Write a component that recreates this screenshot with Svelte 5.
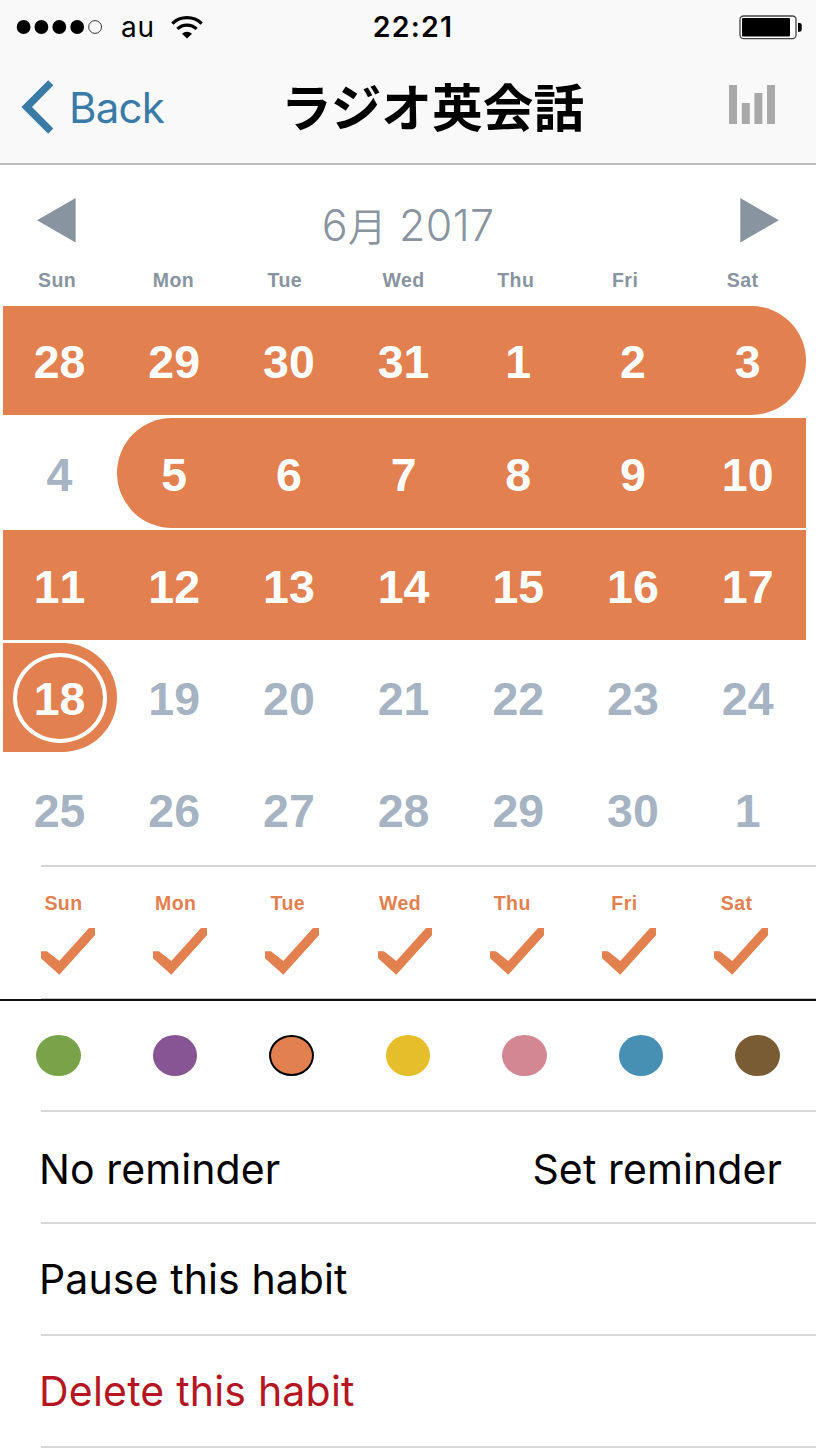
<script lang="ts">
  type Day = { label: number; state: 'done' | 'todo'; cap?: 'start' | 'end'; today?: boolean };

  const weekdays = ['Sun', 'Mon', 'Tue', 'Wed', 'Thu', 'Fri', 'Sat'];

  const colors = [
    { name: 'green', hex: '#79a348' },
    { name: 'purple', hex: '#885594' },
    { name: 'orange', hex: '#e2804f' },
    { name: 'yellow', hex: '#e6be2c' },
    { name: 'pink', hex: '#d28793' },
    { name: 'blue', hex: '#478fb3' },
    { name: 'brown', hex: '#7a5c34' }
  ];

  let selected = $state('orange');

  // Streak boundaries inside the visible 5 weeks, as cell indexes
  const streaks = [
    { from: -1, to: 6 },
    { from: 8, to: 21 }
  ];
  const todayIndex = 21;

  function buildDays(): Day[] {
    const labels = [28, 29, 30, 31];
    for (let d = 1; d <= 30; d++) labels.push(d);
    labels.push(1);

    return labels.map((label, i) => {
      const streak = streaks.find((s) => i >= s.from && i <= s.to);
      return {
        label,
        state: streak ? 'done' : 'todo',
        cap: streak?.from === i ? 'start' : streak?.to === i ? 'end' : undefined,
        today: i === todayIndex
      };
    });
  }

  const days = buildDays();
</script>

<div class="screen">
  <header>
    <div class="status">
      <div class="carrier">
        <svg class="signal" width="88" height="16" viewBox="0 0 88 16">
          <circle cx="7.6" cy="8" r="6.9" />
          <circle cx="25.4" cy="8" r="6.9" />
          <circle cx="43.3" cy="8" r="6.9" />
          <circle cx="61.2" cy="8" r="6.9" />
          <circle cx="79.1" cy="8" r="6.4" fill="none" stroke="#333" stroke-width="1" />
        </svg>
        <span class="network">au</span>
        <svg class="wifi" width="32" height="23" viewBox="0 0 32 23">
          <path d="M1.3 7.6a21.3 21.3 0 0 1 29.4 0" fill="none" stroke="#000" stroke-width="3.3" />
          <path d="M6.4 12.9a14 14 0 0 1 19.2 0" fill="none" stroke="#000" stroke-width="3.3" />
          <path d="M11 17.7a7.3 7.3 0 0 1 10 0L16 22.6z" />
        </svg>
      </div>
      <span class="time">22:21</span>
      <svg class="battery" width="64" height="25" viewBox="0 0 64 25">
        <rect x="1" y="1" width="56" height="22.6" rx="3.5" fill="#fff" stroke="#444" stroke-width="1.3" />
        <rect x="3" y="3" width="48" height="18.6" rx="1" />
        <path d="M59 8h1.5q2.2 0 2.2 2.2v4.3q0 2.2-2.2 2.2H59z" />
      </svg>
    </div>

    <nav>
      <a class="back" href="#back">
        <svg width="33" height="54" viewBox="0 0 33 54">
          <path d="M27.2.2 32.3 5.2 11 27 32.3 48.6 27.2 53.8 0.4 27z" fill="#397ba6" />
        </svg>
        <span>Back</span>
      </a>
      <h1>ラジオ英会話</h1>
      <svg class="stats" width="46" height="39" viewBox="0 0 46 39" fill="#a9a9a9">
        <rect x="0" y="0" width="8" height="39" />
        <rect x="12.8" y="18" width="8" height="21" />
        <rect x="25.4" y="8" width="8" height="31" />
        <rect x="38" y="0" width="8" height="39" />
      </svg>
    </nav>
  </header>

  <section class="month">
    <svg class="arrow" width="39" height="45" viewBox="0 0 39 45"><path d="M0 22.3 38.6 0v44.6z" /></svg>
    <h2>6<span class="kanji">月</span> 2017</h2>
    <svg class="arrow" width="39" height="45" viewBox="0 0 39 45"><path d="M38.8 22.3.3 0v44.6z" /></svg>
  </section>

  <div class="weekdays">
    {#each weekdays as name}
      <span>{name}</span>
    {/each}
  </div>

  <div class="calendar">
    {#each days as day}
      <div class="day {day.state} {day.cap ?? ''}">
        {#if day.today}
          <span class="ring"></span>
        {/if}
        <span class="number">{day.label}</span>
      </div>
    {/each}
  </div>

  <section class="schedule">
    {#each weekdays as name}
      <div class="slot">
        <span>{name}</span>
        <svg width="54" height="47" viewBox="0 0 54 47">
          <path d="M0 23.2h6L18.3 33 48 0h6v7.3L18.3 46.8 0 30.3z" fill="#e2804f" />
        </svg>
      </div>
    {/each}
  </section>

  <section class="palette">
    {#each colors as color}
      <button
        class="swatch"
        class:selected={selected === color.name}
        style="background: {color.hex}"
        aria-label={color.name}
        onclick={() => (selected = color.name)}
      ></button>
    {/each}
  </section>

  <div class="actions">
    <div class="row first"><span>No reminder</span><span>Set reminder</span></div>
    <div class="row"><span>Pause this habit</span></div>
    <div class="row danger"><span>Delete this habit</span></div>
  </div>
</div>

<style>
  :global(body) {
    margin: 0;
    background: #fff;
  }

  .screen {
    width: 816px;
    height: 1448px;
    overflow: hidden;
    background: #fff;
    font-family: Inter, 'Noto Sans CJK JP', sans-serif;
    color: #000;
  }

  header {
    box-sizing: border-box;
    height: 165px;
    background: #f9f9f9;
    border-bottom: 2px solid #bcbcbc;
  }

  .status {
    display: grid;
    grid-template-columns: 1fr auto 1fr;
    align-items: center;
    height: 52px;
    padding: 0 13px 0 16px;
  }

  .carrier {
    display: flex;
    align-items: center;
  }

  .network {
    margin-left: 17px;
    font-size: 28px;
    line-height: 54px;
    letter-spacing: 0.8px;
  }

  .wifi {
    margin-left: 16px;
  }

  .time {
    padding-left: 7px;
    font-size: 28.5px;
    font-weight: 600;
    line-height: 54px;
    letter-spacing: 1.2px;
  }

  .battery {
    justify-self: end;
  }

  nav {
    display: grid;
    grid-template-columns: 260px auto 1fr;
    align-items: center;
    height: 110px;
    padding: 0 41px 0 21px;
  }

  .back {
    display: flex;
    align-items: center;
    gap: 15px;
    color: #397ba6;
    font-size: 42px;
    letter-spacing: -0.8px;
    text-decoration: none;
  }

  h1 {
    margin: 0;
    padding-bottom: 4px;
    font-family: 'Noto Sans CJK JP', sans-serif;
    font-size: 50.7px;
    font-weight: 700;
    line-height: 106px;
  }

  .stats {
    justify-self: end;
    margin-bottom: 5px;
  }

  .month {
    display: flex;
    align-items: center;
    justify-content: space-between;
    height: 110px;
    padding: 0 37px;
  }

  .arrow {
    fill: #8994a1;
  }

  h2 {
    margin: 0;
    padding-top: 9px;
    color: #8994a1;
    font-size: 43px;
    font-weight: 350;
    line-height: 60px;
    letter-spacing: 0.3px;
  }

  .kanji {
    font-size: 38.5px;
    line-height: 1;
  }

  .weekdays {
    display: grid;
    grid-template-columns: repeat(7, 114.8px);
    height: 31px;
    padding-left: 38px;
    color: #8994a1;
    font: bold 19.5px/10px 'Liberation Sans', Arial, sans-serif;
    letter-spacing: 0.45px;
  }

  .calendar {
    display: grid;
    grid-template-columns: repeat(7, 114.7px);
    grid-auto-rows: 109.3px;
    row-gap: 2.95px;
    height: 559px;
    padding-left: 2.7px;
  }

  .day {
    position: relative;
    display: flex;
    align-items: center;
    justify-content: center;
    color: #a5b3c3;
    font: bold 46.5px/1 'Liberation Sans', Arial, sans-serif;
    font-kerning: none;
  }

  .done {
    background: #e2804f;
    color: #fff;
  }

  .start {
    border-radius: 57px 0 0 57px;
  }

  .end {
    border-radius: 0 57px 57px 0;
  }

  .number {
    padding: 4px 1px 0 0;
  }

  .ring {
    position: absolute;
    inset: 10px 10px 9px 10px;
    border: 4px solid #fff;
    border-radius: 50%;
  }

  .schedule {
    display: grid;
    grid-template-columns: repeat(7, 112.2px);
    box-sizing: border-box;
    height: 134px;
    margin-left: 41px;
    border-top: 2px solid #d3d5d8;
    border-bottom: 1px solid #c4c4c4;
  }

  .slot {
    display: flex;
    flex-direction: column;
    gap: 14px;
    width: 54px;
    padding-top: 26px;
    color: #e2804f;
    font: bold 19.5px/21px 'Liberation Sans', Arial, sans-serif;
    letter-spacing: 0.45px;
  }

  .slot span {
    width: 45px;
    text-align: center;
  }

  .palette {
    display: flex;
    align-items: center;
    justify-content: space-between;
    box-sizing: border-box;
    height: 111px;
    padding: 0 36px;
    border-top: 2px solid #111;
  }

  .swatch {
    box-sizing: border-box;
    width: 44.5px;
    height: 41px;
    padding: 0;
    border: 0;
    border-radius: 50%;
  }

  .selected {
    border: 2px solid #000;
  }

  .actions {
    margin-left: 41px;
    border-top: 2px solid #d6d6d6;
  }

  .row {
    display: flex;
    align-items: center;
    justify-content: space-between;
    box-sizing: border-box;
    height: 112px;
    padding: 0 34px 0 0;
    border-bottom: 2px solid #d6d6d6;
    font-size: 41px;
    letter-spacing: 0.1px;
  }

  .row span:first-child {
    margin-left: -2px;
  }

  .first {
    padding-top: 4px;
  }

  .danger {
    color: #b51621;
    letter-spacing: 0.2px;
  }
</style>
